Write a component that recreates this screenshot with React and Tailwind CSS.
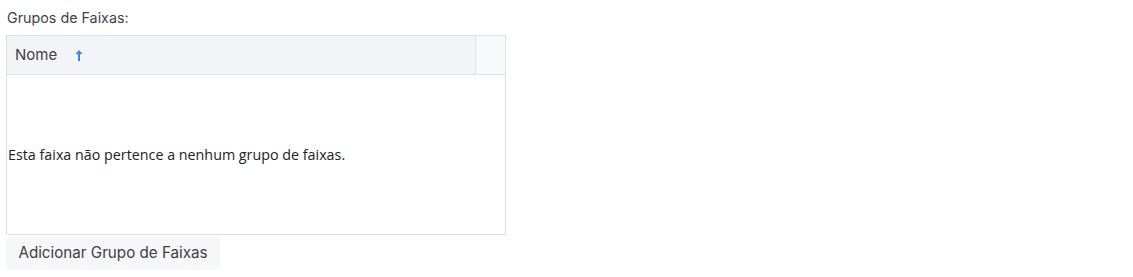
export default function App() {
  return (
    <div className="w-[1133px] h-[277px] bg-white pl-[6px] pt-[8px]" style={{ fontFamily: "Inter, 'Noto Sans', sans-serif" }}>
      <div className="text-[14.3px] leading-[20px] text-[#3f3f46] pl-[1px]">Grupos de Faixas:</div>
      <div className="mt-[7px] w-[500px] h-[200px] border border-[#e0e0e0] flex flex-col">
        <div className="h-[39px] flex border-b border-[#e0e0e0] bg-[#f3f4f6]">
          <div className="flex-1 flex items-center pl-[8px] text-[15px] text-[#3f3f46]">
            <span>Nome</span>
            <svg className="ml-[18px]" width="8" height="11" viewBox="0 0 8 11">
              <path d="M4 0 L7.5 4 L5 4 L5 11 L3 11 L3 4 L0.5 4 Z" fill="#3b82f6" />
            </svg>
          </div>
          <div className="w-[30px] border-l border-[#e0e0e0] bg-[#f8f9fb]"></div>
        </div>
        <div className="flex-1 flex items-center">
          <span className="text-[14.3px] text-[#222] pl-[1px]" style={{ fontFamily: "'Open Sans', 'Noto Sans', sans-serif" }}>
            Esta faixa não pertence a nenhum grupo de faixas.
          </span>
        </div>
      </div>
      <button className="mt-[1px] h-[34px] w-[214px] rounded-[6px] bg-[#f6f7f9] text-[15.2px] text-[#3f3f46] flex items-center justify-center">
        Adicionar Grupo de Faixas
      </button>
    </div>
  );
}
